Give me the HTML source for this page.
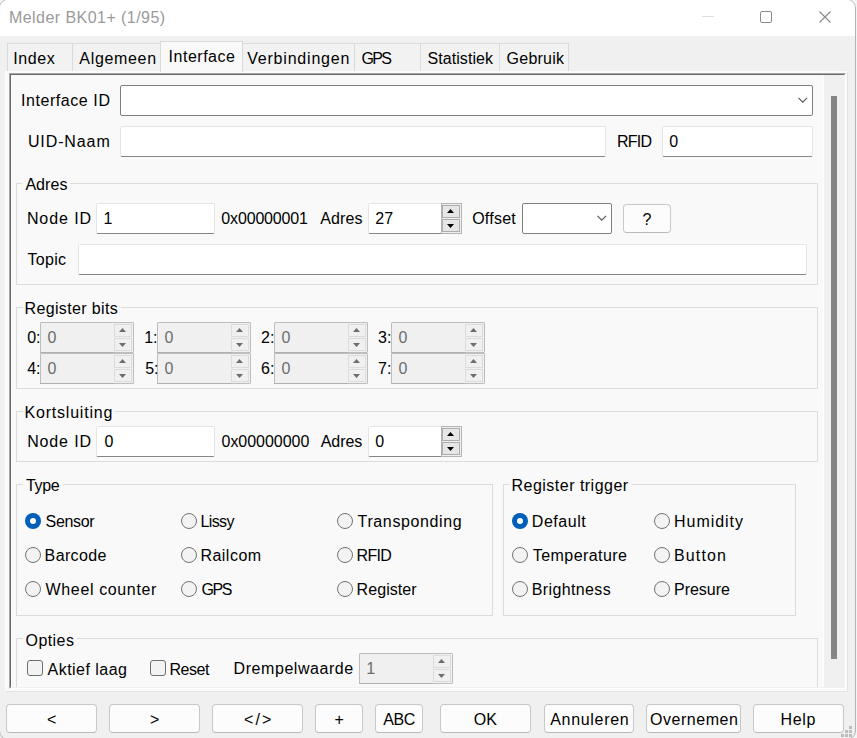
<!DOCTYPE html>
<html><head><meta charset="utf-8"><style>
html,body{margin:0;padding:0;}
body{width:857px;height:738px;overflow:hidden;position:relative;background:#f4f4f4;font-family:'Liberation Sans', sans-serif;}
div,svg{position:absolute;}
.t{font-size:16px;line-height:16px;white-space:nowrap;z-index:5;}
</style></head><body>
<div style="left:-1px;top:-1px;width:857px;height:741px;border-radius:9px;background:#f0f0f0;border:1px solid #b4b4b4;box-sizing:border-box;overflow:hidden"><div style="left:0;top:0;width:855px;height:36px;background:#fff"></div></div>
<div style="left:702px;top:16px;width:12px;height:1px;background:#dedede"></div>
<div style="left:760px;top:11px;width:12px;height:12px;border:1px solid #8a8a8a;border-radius:2px;box-sizing:border-box"></div>
<svg style="left:818px;top:10px" width="14" height="14" viewBox="0 0 14 14"><path d="M1.5 1.5L12.5 12.5M12.5 1.5L1.5 12.5" stroke="#8a8a8a" stroke-width="1.1" fill="none"/></svg>
<div style="left:7px;top:43px;width:66px;height:29px;background:#f2f2f2;border:1px solid #dadada;border-bottom:none;box-sizing:border-box"></div>
<div style="left:72px;top:43px;width:89px;height:29px;background:#f2f2f2;border:1px solid #dadada;border-bottom:none;box-sizing:border-box"></div>
<div style="left:160px;top:41px;width:83px;height:31px;background:#f9f9f9;border:1px solid #d9d9d9;border-bottom:none;box-sizing:border-box;z-index:2"></div>
<div style="left:242px;top:43px;width:113px;height:29px;background:#f2f2f2;border:1px solid #dadada;border-bottom:none;box-sizing:border-box"></div>
<div style="left:354px;top:43px;width:67px;height:29px;background:#f2f2f2;border:1px solid #dadada;border-bottom:none;box-sizing:border-box"></div>
<div style="left:420px;top:43px;width:80px;height:29px;background:#f2f2f2;border:1px solid #dadada;border-bottom:none;box-sizing:border-box"></div>
<div style="left:499px;top:43px;width:70px;height:29px;background:#f2f2f2;border:1px solid #dadada;border-bottom:none;box-sizing:border-box"></div>
<div style="left:5px;top:71px;width:843px;height:621px;background:#fafafa;border:1px solid #fcfcfc;border-right-color:#e3e3e3;border-bottom-color:#e3e3e3;box-sizing:border-box"></div>
<div style="left:9px;top:73px;width:837px;height:616px;border-left:2px solid #a6a6a6;border-top:2px solid #a6a6a6;border-right:2px solid #fff;border-bottom:2px solid #fff;box-sizing:border-box"></div>
<div style="left:10px;top:74px;width:835px;height:614px;border-left:1px solid #696969;border-top:1px solid #696969;border-right:1px solid #f0f0f0;border-bottom:1px solid #f0f0f0;box-sizing:border-box;background:#f9f9f9"></div>
<div style="left:823px;top:75px;width:21px;height:612px;background:#f0f0f0;border-left:1px solid #fdfdfd;box-sizing:border-box"></div>
<div style="left:831px;top:96px;width:6px;height:563px;background:#858585"></div>
<div style="left:120px;top:85px;width:693px;height:31px;background:#fff;border:1px solid #808080;border-radius:2px;box-sizing:border-box"></div>
<svg style="left:798px;top:96.7px" width="10" height="7" viewBox="0 0 10 7"><path d="M0.5 0.8L4.75 5.2L9 0.8" stroke="#555" stroke-width="1.1" fill="none"/></svg>
<div style="left:120px;top:126px;width:486px;height:31px;background:#fff;border:1px solid #e5e5e5;border-bottom:1px solid #868686;border-radius:2px;box-sizing:border-box"></div>
<div style="left:662px;top:126px;width:151px;height:31px;background:#fff;border:1px solid #e5e5e5;border-bottom:1px solid #868686;border-radius:2px;box-sizing:border-box"></div>
<div style="left:16px;top:183px;width:802px;height:102px;border:1px solid #dcdcdc;box-sizing:border-box"></div>
<div style="left:22.4px;top:182px;width:48px;height:3px;background:#f9f9f9"></div>
<div style="left:96px;top:203px;width:119px;height:31px;background:#fff;border:1px solid #e5e5e5;border-bottom:1px solid #868686;border-radius:2px;box-sizing:border-box"></div>
<div style="left:368px;top:203px;width:74px;height:31px;background:#fff;border:1px solid #e5e5e5;border-bottom:1px solid #868686;border-radius:2px 0 0 2px;box-sizing:border-box"></div>
<div style="left:441px;top:203px;width:21px;height:31px;background:#f0f0f0;border:1px solid #b4b4b4;box-sizing:border-box"></div>
<div style="left:442px;top:205px;width:18px;height:13px;background:#e6e6e6;border:1px solid #adadad;box-sizing:border-box"></div>
<div style="left:442px;top:219px;width:18px;height:13px;background:#e6e6e6;border:1px solid #adadad;box-sizing:border-box"></div>
<svg style="left:447px;top:209px" width="7" height="4" viewBox="0 0 7 4"><path d="M0 4L3.5 0L7 4Z" fill="#000"/></svg>
<svg style="left:447px;top:224px" width="7" height="4" viewBox="0 0 7 4"><path d="M0 0L3.5 4L7 0Z" fill="#000"/></svg>
<div style="left:522px;top:203px;width:90px;height:31px;background:#fff;border:1px solid #808080;border-radius:2px;box-sizing:border-box"></div>
<svg style="left:597px;top:214.7px" width="10" height="7" viewBox="0 0 10 7"><path d="M0.5 0.8L4.75 5.2L9 0.8" stroke="#555" stroke-width="1.1" fill="none"/></svg>
<div style="left:623px;top:204px;width:48px;height:29px;background:#fcfcfc;border:1px solid #c8c8c8;border-bottom-color:#bababa;border-radius:4px;box-sizing:border-box"></div>
<div style="left:78px;top:244px;width:729px;height:31px;background:#fff;border:1px solid #e5e5e5;border-bottom:1px solid #868686;border-radius:2px;box-sizing:border-box"></div>
<div style="left:16px;top:307px;width:802px;height:82px;border:1px solid #dcdcdc;box-sizing:border-box"></div>
<div style="left:22.5px;top:306px;width:98.3px;height:3px;background:#f9f9f9"></div>
<div style="left:40px;top:322px;width:94px;height:31px;background:#f0f0f0;border:1px solid #bdbdbd;border-radius:1px;box-sizing:border-box"></div>
<div style="left:40px;top:352px;width:74px;height:1px;background:#b0b0b0"></div>
<div style="left:114px;top:324px;width:18px;height:13px;background:#f0f0f0;border:1px solid #dcdcdc;box-sizing:border-box"></div>
<div style="left:114px;top:338px;width:18px;height:13px;background:#f0f0f0;border:1px solid #dcdcdc;box-sizing:border-box"></div>
<svg style="left:119px;top:328px" width="7" height="4" viewBox="0 0 7 4"><path d="M0 4L3.5 0L7 4Z" fill="#6d6d6d"/></svg>
<svg style="left:119px;top:343px" width="7" height="4" viewBox="0 0 7 4"><path d="M0 0L3.5 4L7 0Z" fill="#6d6d6d"/></svg>
<div style="left:157px;top:322px;width:94px;height:31px;background:#f0f0f0;border:1px solid #bdbdbd;border-radius:1px;box-sizing:border-box"></div>
<div style="left:157px;top:352px;width:74px;height:1px;background:#b0b0b0"></div>
<div style="left:231px;top:324px;width:18px;height:13px;background:#f0f0f0;border:1px solid #dcdcdc;box-sizing:border-box"></div>
<div style="left:231px;top:338px;width:18px;height:13px;background:#f0f0f0;border:1px solid #dcdcdc;box-sizing:border-box"></div>
<svg style="left:236px;top:328px" width="7" height="4" viewBox="0 0 7 4"><path d="M0 4L3.5 0L7 4Z" fill="#6d6d6d"/></svg>
<svg style="left:236px;top:343px" width="7" height="4" viewBox="0 0 7 4"><path d="M0 0L3.5 4L7 0Z" fill="#6d6d6d"/></svg>
<div style="left:274px;top:322px;width:94px;height:31px;background:#f0f0f0;border:1px solid #bdbdbd;border-radius:1px;box-sizing:border-box"></div>
<div style="left:274px;top:352px;width:74px;height:1px;background:#b0b0b0"></div>
<div style="left:348px;top:324px;width:18px;height:13px;background:#f0f0f0;border:1px solid #dcdcdc;box-sizing:border-box"></div>
<div style="left:348px;top:338px;width:18px;height:13px;background:#f0f0f0;border:1px solid #dcdcdc;box-sizing:border-box"></div>
<svg style="left:353px;top:328px" width="7" height="4" viewBox="0 0 7 4"><path d="M0 4L3.5 0L7 4Z" fill="#6d6d6d"/></svg>
<svg style="left:353px;top:343px" width="7" height="4" viewBox="0 0 7 4"><path d="M0 0L3.5 4L7 0Z" fill="#6d6d6d"/></svg>
<div style="left:391px;top:322px;width:94px;height:31px;background:#f0f0f0;border:1px solid #bdbdbd;border-radius:1px;box-sizing:border-box"></div>
<div style="left:391px;top:352px;width:74px;height:1px;background:#b0b0b0"></div>
<div style="left:465px;top:324px;width:18px;height:13px;background:#f0f0f0;border:1px solid #dcdcdc;box-sizing:border-box"></div>
<div style="left:465px;top:338px;width:18px;height:13px;background:#f0f0f0;border:1px solid #dcdcdc;box-sizing:border-box"></div>
<svg style="left:470px;top:328px" width="7" height="4" viewBox="0 0 7 4"><path d="M0 4L3.5 0L7 4Z" fill="#6d6d6d"/></svg>
<svg style="left:470px;top:343px" width="7" height="4" viewBox="0 0 7 4"><path d="M0 0L3.5 4L7 0Z" fill="#6d6d6d"/></svg>
<div style="left:40px;top:353px;width:94px;height:31px;background:#f0f0f0;border:1px solid #bdbdbd;border-radius:1px;box-sizing:border-box"></div>
<div style="left:40px;top:383px;width:74px;height:1px;background:#b0b0b0"></div>
<div style="left:114px;top:355px;width:18px;height:13px;background:#f0f0f0;border:1px solid #dcdcdc;box-sizing:border-box"></div>
<div style="left:114px;top:369px;width:18px;height:13px;background:#f0f0f0;border:1px solid #dcdcdc;box-sizing:border-box"></div>
<svg style="left:119px;top:359px" width="7" height="4" viewBox="0 0 7 4"><path d="M0 4L3.5 0L7 4Z" fill="#6d6d6d"/></svg>
<svg style="left:119px;top:374px" width="7" height="4" viewBox="0 0 7 4"><path d="M0 0L3.5 4L7 0Z" fill="#6d6d6d"/></svg>
<div style="left:157px;top:353px;width:94px;height:31px;background:#f0f0f0;border:1px solid #bdbdbd;border-radius:1px;box-sizing:border-box"></div>
<div style="left:157px;top:383px;width:74px;height:1px;background:#b0b0b0"></div>
<div style="left:231px;top:355px;width:18px;height:13px;background:#f0f0f0;border:1px solid #dcdcdc;box-sizing:border-box"></div>
<div style="left:231px;top:369px;width:18px;height:13px;background:#f0f0f0;border:1px solid #dcdcdc;box-sizing:border-box"></div>
<svg style="left:236px;top:359px" width="7" height="4" viewBox="0 0 7 4"><path d="M0 4L3.5 0L7 4Z" fill="#6d6d6d"/></svg>
<svg style="left:236px;top:374px" width="7" height="4" viewBox="0 0 7 4"><path d="M0 0L3.5 4L7 0Z" fill="#6d6d6d"/></svg>
<div style="left:274px;top:353px;width:94px;height:31px;background:#f0f0f0;border:1px solid #bdbdbd;border-radius:1px;box-sizing:border-box"></div>
<div style="left:274px;top:383px;width:74px;height:1px;background:#b0b0b0"></div>
<div style="left:348px;top:355px;width:18px;height:13px;background:#f0f0f0;border:1px solid #dcdcdc;box-sizing:border-box"></div>
<div style="left:348px;top:369px;width:18px;height:13px;background:#f0f0f0;border:1px solid #dcdcdc;box-sizing:border-box"></div>
<svg style="left:353px;top:359px" width="7" height="4" viewBox="0 0 7 4"><path d="M0 4L3.5 0L7 4Z" fill="#6d6d6d"/></svg>
<svg style="left:353px;top:374px" width="7" height="4" viewBox="0 0 7 4"><path d="M0 0L3.5 4L7 0Z" fill="#6d6d6d"/></svg>
<div style="left:391px;top:353px;width:94px;height:31px;background:#f0f0f0;border:1px solid #bdbdbd;border-radius:1px;box-sizing:border-box"></div>
<div style="left:391px;top:383px;width:74px;height:1px;background:#b0b0b0"></div>
<div style="left:465px;top:355px;width:18px;height:13px;background:#f0f0f0;border:1px solid #dcdcdc;box-sizing:border-box"></div>
<div style="left:465px;top:369px;width:18px;height:13px;background:#f0f0f0;border:1px solid #dcdcdc;box-sizing:border-box"></div>
<svg style="left:470px;top:359px" width="7" height="4" viewBox="0 0 7 4"><path d="M0 4L3.5 0L7 4Z" fill="#6d6d6d"/></svg>
<svg style="left:470px;top:374px" width="7" height="4" viewBox="0 0 7 4"><path d="M0 0L3.5 4L7 0Z" fill="#6d6d6d"/></svg>
<div style="left:16px;top:411px;width:802px;height:51px;border:1px solid #dcdcdc;box-sizing:border-box"></div>
<div style="left:22.6px;top:410px;width:91.8px;height:3px;background:#f9f9f9"></div>
<div style="left:96px;top:426px;width:119px;height:31px;background:#fff;border:1px solid #e5e5e5;border-bottom:1px solid #868686;border-radius:2px;box-sizing:border-box"></div>
<div style="left:368px;top:426px;width:74px;height:31px;background:#fff;border:1px solid #e5e5e5;border-bottom:1px solid #868686;border-radius:2px 0 0 2px;box-sizing:border-box"></div>
<div style="left:441px;top:426px;width:21px;height:31px;background:#f0f0f0;border:1px solid #b4b4b4;box-sizing:border-box"></div>
<div style="left:442px;top:428px;width:18px;height:13px;background:#e6e6e6;border:1px solid #adadad;box-sizing:border-box"></div>
<div style="left:442px;top:442px;width:18px;height:13px;background:#e6e6e6;border:1px solid #adadad;box-sizing:border-box"></div>
<svg style="left:447px;top:432px" width="7" height="4" viewBox="0 0 7 4"><path d="M0 4L3.5 0L7 4Z" fill="#000"/></svg>
<svg style="left:447px;top:447px" width="7" height="4" viewBox="0 0 7 4"><path d="M0 0L3.5 4L7 0Z" fill="#000"/></svg>
<div style="left:16px;top:484px;width:477px;height:132px;border:1px solid #dcdcdc;box-sizing:border-box"></div>
<div style="left:23.1px;top:483px;width:39.6px;height:3px;background:#f9f9f9"></div>
<div style="left:25px;top:513px;width:16px;height:16px;background:#005fb8;border-radius:50%"></div>
<div style="left:30px;top:518px;width:6px;height:6px;background:#fff;border-radius:50%"></div>
<div style="left:181px;top:513px;width:16px;height:16px;background:#f3f3f3;border:1px solid #737373;border-radius:50%;box-sizing:border-box"></div>
<div style="left:337px;top:513px;width:16px;height:16px;background:#f3f3f3;border:1px solid #737373;border-radius:50%;box-sizing:border-box"></div>
<div style="left:25px;top:547px;width:16px;height:16px;background:#f3f3f3;border:1px solid #737373;border-radius:50%;box-sizing:border-box"></div>
<div style="left:181px;top:547px;width:16px;height:16px;background:#f3f3f3;border:1px solid #737373;border-radius:50%;box-sizing:border-box"></div>
<div style="left:337px;top:547px;width:16px;height:16px;background:#f3f3f3;border:1px solid #737373;border-radius:50%;box-sizing:border-box"></div>
<div style="left:25px;top:581px;width:16px;height:16px;background:#f3f3f3;border:1px solid #737373;border-radius:50%;box-sizing:border-box"></div>
<div style="left:181px;top:581px;width:16px;height:16px;background:#f3f3f3;border:1px solid #737373;border-radius:50%;box-sizing:border-box"></div>
<div style="left:337px;top:581px;width:16px;height:16px;background:#f3f3f3;border:1px solid #737373;border-radius:50%;box-sizing:border-box"></div>
<div style="left:503px;top:484px;width:293px;height:132px;border:1px solid #dcdcdc;box-sizing:border-box"></div>
<div style="left:509.5px;top:483px;width:122.3px;height:3px;background:#f9f9f9"></div>
<div style="left:512px;top:513px;width:16px;height:16px;background:#005fb8;border-radius:50%"></div>
<div style="left:517px;top:518px;width:6px;height:6px;background:#fff;border-radius:50%"></div>
<div style="left:654px;top:513px;width:16px;height:16px;background:#f3f3f3;border:1px solid #737373;border-radius:50%;box-sizing:border-box"></div>
<div style="left:512px;top:547px;width:16px;height:16px;background:#f3f3f3;border:1px solid #737373;border-radius:50%;box-sizing:border-box"></div>
<div style="left:654px;top:547px;width:16px;height:16px;background:#f3f3f3;border:1px solid #737373;border-radius:50%;box-sizing:border-box"></div>
<div style="left:512px;top:581px;width:16px;height:16px;background:#f3f3f3;border:1px solid #737373;border-radius:50%;box-sizing:border-box"></div>
<div style="left:654px;top:581px;width:16px;height:16px;background:#f3f3f3;border:1px solid #737373;border-radius:50%;box-sizing:border-box"></div>
<div style="left:11px;top:620px;width:813px;height:67px;overflow:hidden">
<div style="left:5px;top:18px;width:802px;height:80px;border:1px solid #dcdcdc;box-sizing:border-box"></div>
<div style="left:11.6px;top:17px;width:54px;height:3px;background:#f9f9f9"></div>
</div>
<div style="left:27px;top:660px;width:16px;height:16px;background:#f3f3f3;border:1px solid #6f6f6f;border-radius:3px;box-sizing:border-box"></div>
<div style="left:150px;top:660px;width:16px;height:16px;background:#f3f3f3;border:1px solid #6f6f6f;border-radius:3px;box-sizing:border-box"></div>
<div style="left:359px;top:653px;width:94px;height:31px;background:#f0f0f0;border:1px solid #bdbdbd;border-radius:1px;box-sizing:border-box"></div>
<div style="left:359px;top:683px;width:74px;height:1px;background:#b0b0b0"></div>
<div style="left:433px;top:655px;width:18px;height:13px;background:#f0f0f0;border:1px solid #dcdcdc;box-sizing:border-box"></div>
<div style="left:433px;top:669px;width:18px;height:13px;background:#f0f0f0;border:1px solid #dcdcdc;box-sizing:border-box"></div>
<svg style="left:438px;top:659px" width="7" height="4" viewBox="0 0 7 4"><path d="M0 4L3.5 0L7 4Z" fill="#6d6d6d"/></svg>
<svg style="left:438px;top:674px" width="7" height="4" viewBox="0 0 7 4"><path d="M0 0L3.5 4L7 0Z" fill="#6d6d6d"/></svg>
<div style="left:6px;top:704px;width:91px;height:29px;background:#fcfcfc;border:1px solid #c8c8c8;border-bottom-color:#bababa;border-radius:4px;box-sizing:border-box"></div>
<div style="left:109px;top:704px;width:91px;height:29px;background:#fcfcfc;border:1px solid #c8c8c8;border-bottom-color:#bababa;border-radius:4px;box-sizing:border-box"></div>
<div style="left:212px;top:704px;width:91px;height:29px;background:#fcfcfc;border:1px solid #c8c8c8;border-bottom-color:#bababa;border-radius:4px;box-sizing:border-box"></div>
<div style="left:315px;top:704px;width:48px;height:29px;background:#fcfcfc;border:1px solid #c8c8c8;border-bottom-color:#bababa;border-radius:4px;box-sizing:border-box"></div>
<div style="left:375px;top:704px;width:48px;height:29px;background:#fcfcfc;border:1px solid #c8c8c8;border-bottom-color:#bababa;border-radius:4px;box-sizing:border-box"></div>
<div style="left:440px;top:704px;width:91px;height:29px;background:#fcfcfc;border:1px solid #c8c8c8;border-bottom-color:#bababa;border-radius:4px;box-sizing:border-box"></div>
<div style="left:544px;top:704px;width:90px;height:29px;background:#fcfcfc;border:1px solid #c8c8c8;border-bottom-color:#bababa;border-radius:4px;box-sizing:border-box"></div>
<div style="left:646px;top:704px;width:95px;height:29px;background:#fcfcfc;border:1px solid #c8c8c8;border-bottom-color:#bababa;border-radius:4px;box-sizing:border-box"></div>
<div style="left:753px;top:704px;width:91px;height:29px;background:#fcfcfc;border:1px solid #c8c8c8;border-bottom-color:#bababa;border-radius:4px;box-sizing:border-box"></div>
<div style="left:849px;top:726px;width:3px;height:3px;background:#bdbdbd"></div>
<div style="left:845px;top:730px;width:3px;height:3px;background:#bdbdbd"></div>
<div style="left:849px;top:730px;width:3px;height:3px;background:#bdbdbd"></div>
<div style="left:841px;top:734px;width:3px;height:3px;background:#bdbdbd"></div>
<div style="left:845px;top:734px;width:3px;height:3px;background:#bdbdbd"></div>
<div style="left:849px;top:734px;width:3px;height:3px;background:#bdbdbd"></div>
<div class="t" style="left:9.00px;top:10px;color:#9a9a9a;letter-spacing:0.447px">Melder BK01+ (1/95)</div>
<div class="t" style="left:13.20px;top:51px;color:#000;letter-spacing:0.615px">Index</div>
<div class="t" style="left:79.30px;top:51px;color:#000;letter-spacing:0.679px">Algemeen</div>
<div class="t" style="left:168.60px;top:49px;color:#000;letter-spacing:0.505px">Interface</div>
<div class="t" style="left:247.20px;top:51px;color:#000;letter-spacing:0.799px">Verbindingen</div>
<div class="t" style="left:361.60px;top:51px;color:#000;letter-spacing:-1.709px">GPS</div>
<div class="t" style="left:427.50px;top:51px;color:#000;letter-spacing:0.065px">Statistiek</div>
<div class="t" style="left:506.60px;top:51px;color:#000;letter-spacing:0.229px">Gebruik</div>
<div class="t" style="left:20.90px;top:93px;color:#000;letter-spacing:0.577px">Interface ID</div>
<div class="t" style="left:27.90px;top:134px;color:#000;letter-spacing:0.895px">UID-Naam</div>
<div class="t" style="left:617.00px;top:134px;color:#000;letter-spacing:-0.791px">RFID</div>
<div class="t" style="left:669.30px;top:134px;color:#000;letter-spacing:0.000px">0</div>
<div class="t" style="left:25.40px;top:177px;color:#000;letter-spacing:0.051px">Adres</div>
<div class="t" style="left:26.90px;top:211px;color:#000;letter-spacing:0.910px">Node ID</div>
<div class="t" style="left:103.50px;top:211px;color:#000;letter-spacing:0.000px">1</div>
<div class="t" style="left:221.30px;top:211px;color:#000;letter-spacing:-0.154px">0x00000001</div>
<div class="t" style="left:320.30px;top:211px;color:#000;letter-spacing:0.126px">Adres</div>
<div class="t" style="left:375.30px;top:211px;color:#000;letter-spacing:0.000px">27</div>
<div class="t" style="left:472.20px;top:211px;color:#000;letter-spacing:0.231px">Offset</div>
<div class="t" style="left:642.50px;top:212px;color:#000;letter-spacing:0.000px">?</div>
<div class="t" style="left:27.50px;top:252px;color:#000;letter-spacing:0.287px">Topic</div>
<div class="t" style="left:24.50px;top:301px;color:#000;letter-spacing:0.365px">Register bits</div>
<div class="t" style="left:27.20px;top:330px;color:#000;letter-spacing:0.000px">0:</div>
<div class="t" style="left:47.50px;top:330px;color:#6d6d6d;letter-spacing:0.000px">0</div>
<div class="t" style="left:144.20px;top:330px;color:#000;letter-spacing:0.000px">1:</div>
<div class="t" style="left:164.50px;top:330px;color:#6d6d6d;letter-spacing:0.000px">0</div>
<div class="t" style="left:261.00px;top:330px;color:#000;letter-spacing:0.000px">2:</div>
<div class="t" style="left:281.50px;top:330px;color:#6d6d6d;letter-spacing:0.000px">0</div>
<div class="t" style="left:378.00px;top:330px;color:#000;letter-spacing:0.000px">3:</div>
<div class="t" style="left:398.50px;top:330px;color:#6d6d6d;letter-spacing:0.000px">0</div>
<div class="t" style="left:27.20px;top:361px;color:#000;letter-spacing:0.000px">4:</div>
<div class="t" style="left:47.50px;top:361px;color:#6d6d6d;letter-spacing:0.000px">0</div>
<div class="t" style="left:145.20px;top:361px;color:#000;letter-spacing:0.000px">5:</div>
<div class="t" style="left:164.50px;top:361px;color:#6d6d6d;letter-spacing:0.000px">0</div>
<div class="t" style="left:261.00px;top:361px;color:#000;letter-spacing:0.000px">6:</div>
<div class="t" style="left:281.50px;top:361px;color:#6d6d6d;letter-spacing:0.000px">0</div>
<div class="t" style="left:378.00px;top:361px;color:#000;letter-spacing:0.000px">7:</div>
<div class="t" style="left:398.50px;top:361px;color:#6d6d6d;letter-spacing:0.000px">0</div>
<div class="t" style="left:24.60px;top:405px;color:#000;letter-spacing:0.777px">Kortsluiting</div>
<div class="t" style="left:27.20px;top:434px;color:#000;letter-spacing:0.860px">Node ID</div>
<div class="t" style="left:104.50px;top:434px;color:#000;letter-spacing:0.000px">0</div>
<div class="t" style="left:221.50px;top:434px;color:#000;letter-spacing:-0.021px">0x00000000</div>
<div class="t" style="left:320.70px;top:434px;color:#000;letter-spacing:-0.049px">Adres</div>
<div class="t" style="left:375.30px;top:434px;color:#000;letter-spacing:0.000px">0</div>
<div class="t" style="left:26.10px;top:478px;color:#000;letter-spacing:-0.396px">Type</div>
<div class="t" style="left:45.60px;top:514px;color:#000;letter-spacing:-0.333px">Sensor</div>
<div class="t" style="left:200.40px;top:514px;color:#000;letter-spacing:-0.588px">Lissy</div>
<div class="t" style="left:357.60px;top:514px;color:#000;letter-spacing:0.623px">Transponding</div>
<div class="t" style="left:44.60px;top:548px;color:#000;letter-spacing:0.367px">Barcode</div>
<div class="t" style="left:200.40px;top:548px;color:#000;letter-spacing:0.490px">Railcom</div>
<div class="t" style="left:356.60px;top:548px;color:#000;letter-spacing:-0.691px">RFID</div>
<div class="t" style="left:45.60px;top:582px;color:#000;letter-spacing:0.630px">Wheel counter</div>
<div class="t" style="left:201.40px;top:582px;color:#000;letter-spacing:-1.409px">GPS</div>
<div class="t" style="left:356.60px;top:582px;color:#000;letter-spacing:0.064px">Register</div>
<div class="t" style="left:511.50px;top:478px;color:#000;letter-spacing:0.484px">Register trigger</div>
<div class="t" style="left:531.80px;top:514px;color:#000;letter-spacing:0.542px">Default</div>
<div class="t" style="left:674.00px;top:514px;color:#000;letter-spacing:0.967px">Humidity</div>
<div class="t" style="left:532.80px;top:548px;color:#000;letter-spacing:0.438px">Temperature</div>
<div class="t" style="left:674.00px;top:548px;color:#000;letter-spacing:1.128px">Button</div>
<div class="t" style="left:531.80px;top:582px;color:#000;letter-spacing:0.367px">Brightness</div>
<div class="t" style="left:674.00px;top:582px;color:#000;letter-spacing:-0.021px">Presure</div>
<div class="t" style="left:25.60px;top:633px;color:#000;letter-spacing:0.412px">Opties</div>
<div class="t" style="left:47.60px;top:662px;color:#000;letter-spacing:0.459px">Aktief laag</div>
<div class="t" style="left:169.50px;top:662px;color:#000;letter-spacing:-0.463px">Reset</div>
<div class="t" style="left:233.60px;top:661px;color:#000;letter-spacing:0.555px">Drempelwaarde</div>
<div class="t" style="left:366.30px;top:661px;color:#6d6d6d;letter-spacing:0.000px">1</div>
<div class="t" style="left:47.00px;top:712px;color:#000;letter-spacing:0.000px">&lt;</div>
<div class="t" style="left:150.00px;top:712px;color:#000;letter-spacing:0.000px">&gt;</div>
<div class="t" style="left:244.10px;top:712px;color:#000;letter-spacing:2.005px">&lt;/&gt;</div>
<div class="t" style="left:334.50px;top:712px;color:#000;letter-spacing:0.000px">+</div>
<div class="t" style="left:383.25px;top:712px;color:#000;letter-spacing:-0.422px">ABC</div>
<div class="t" style="left:473.78px;top:712px;color:#000;letter-spacing:0.000px">OK</div>
<div class="t" style="left:550.20px;top:712px;color:#000;letter-spacing:0.694px">Annuleren</div>
<div class="t" style="left:650.00px;top:712px;color:#000;letter-spacing:0.538px">Overnemen</div>
<div class="t" style="left:780.45px;top:712px;color:#000;letter-spacing:0.697px">Help</div>
</body></html>
